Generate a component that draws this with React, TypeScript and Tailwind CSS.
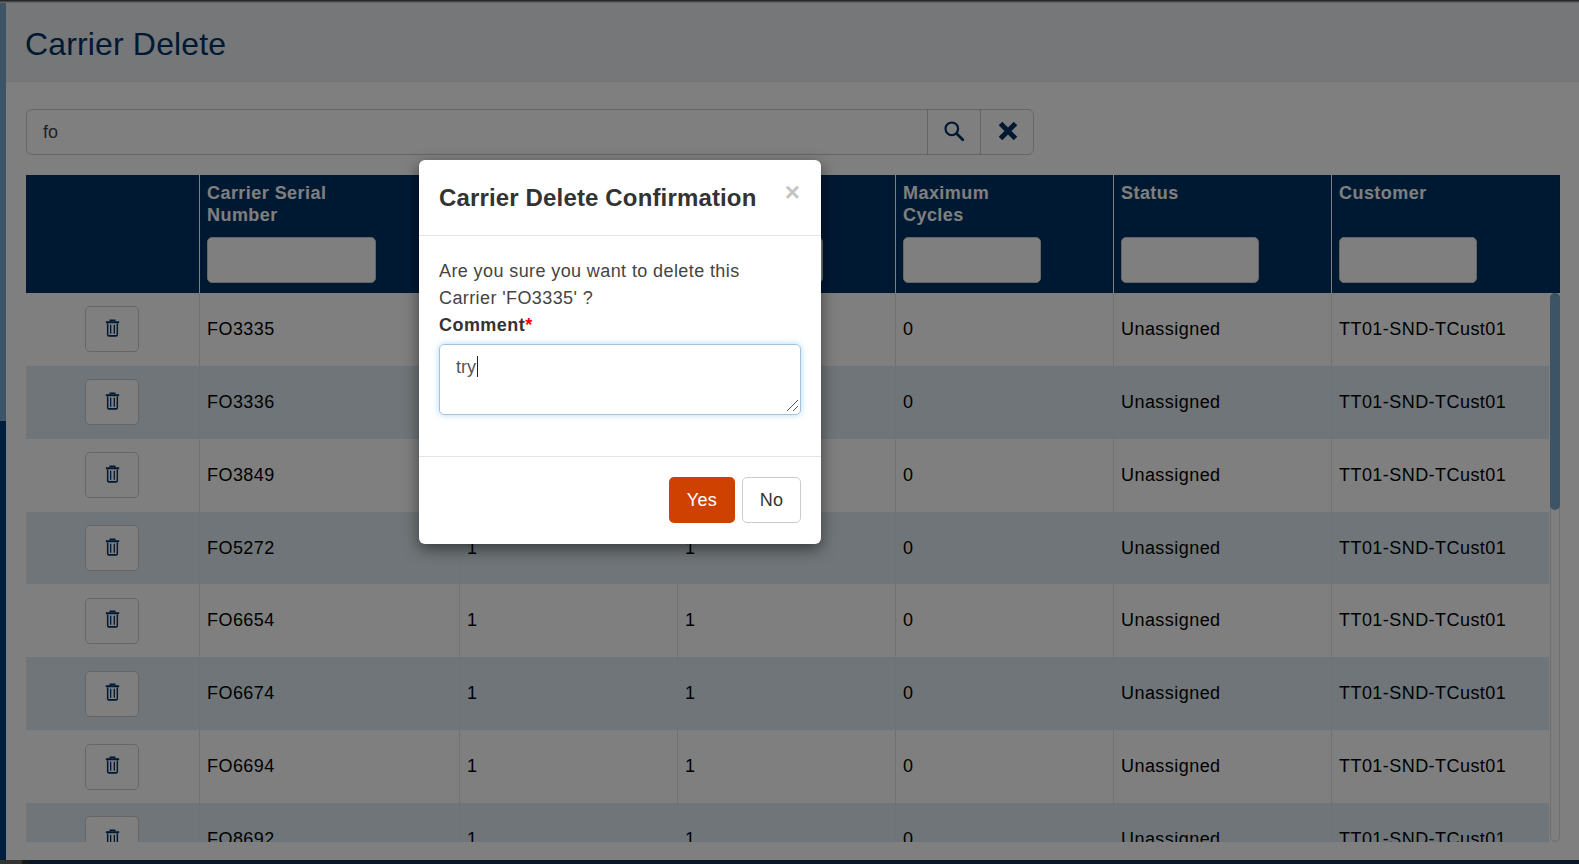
const rows = ["FO3335", "FO3336", "FO3849", "FO5272", "FO6654", "FO6674", "FO6694", "FO8692"]

const columns = "grid grid-cols-[173px_260px_218px_218px_218px_218px_1fr]"

function TrashIcon() {
  return (
    <svg width="15" height="18" viewBox="0 0 18 20" fill="none" stroke="#003366" strokeWidth="1.6" preserveAspectRatio="none">
      <path d="M6.2 3V1.3h5.6V3" />
      <path d="M1 3.6h16" strokeWidth="2.2" />
      <path d="M3.2 5v12.2c0 1 .6 1.6 1.6 1.6h8.4c1 0 1.6-.6 1.6-1.6V5" strokeWidth="1.8" />
      <path d="M6.8 6.5v10M11.2 6.5v10" />
    </svg>
  )
}

function HeaderCell({ label, wide }: { label?: string[]; wide?: boolean }) {
  return (
    <div className="border-l border-white px-[7px] pt-[7px]">
      <div className="h-[55px] text-[18px] leading-[22px] font-bold tracking-[0.45px] text-white">
        {label?.map((line) => <div key={line}>{line}</div>)}
      </div>
      <div className={`${wide ? "w-[169px]" : "w-[138px]"} h-[46px] rounded-[5px] border border-[#ccc] bg-white`} />
    </div>
  )
}

function DataRow({ serial, striped }: { serial: string; striped: boolean }) {
  const cell = "flex items-center border-l border-[#e4e4e4] px-[7px]"
  return (
    <div className={`${columns} h-[72.86px] shrink-0 text-[18px] tracking-[0.45px] text-black ${striped ? "bg-[#dfebf1]" : "bg-white"}`}>
      <div className="flex items-center justify-center pr-[2px]">
        <button className="flex h-[46px] w-[54px] items-center justify-center rounded-[5px] border border-[#ccc] bg-white pb-[3px] pl-[2px]">
          <TrashIcon />
        </button>
      </div>
      <div className={cell}>{serial}</div>
      <div className={cell}>1</div>
      <div className={cell}>1</div>
      <div className={cell}>0</div>
      <div className={cell}>Unassigned</div>
      <div className={cell}>TT01-SND-TCust01</div>
    </div>
  )
}

export default function App() {
  return (
    <div className="relative flex h-screen w-full flex-col overflow-hidden bg-white font-['Liberation_Sans',Arial,sans-serif]">
      <div className="h-[3px] shrink-0 bg-gradient-to-b from-[#333] to-[#eceff3]" />
      <div className="flex min-h-0 flex-1">
        {/* Sidebar edge */}
        <div className="flex w-[6px] shrink-0 flex-col">
          <div className="h-[418px] bg-[#7aa6cc]" />
          <div className="flex-1 bg-[#003e7e]" />
        </div>

        <div className="flex min-w-0 flex-1 flex-col">
          <div className="flex h-[79px] shrink-0 items-center border-b border-[#e5e7e9] bg-[#eceff3] pl-[19px] pt-[3px]">
            <h1 className="text-[32px] tracking-[0.15px] text-[#003366]">Carrier Delete</h1>
          </div>

          <div className="pl-[20px] pt-[27px]">
            {/* Search */}
            <div className="flex h-[46px] w-[1008px] rounded-[6px] border border-[#ccc] text-[18px] text-[#444]">
              <div className="flex flex-1 items-center pl-[16px]">fo</div>
              <div className="flex w-[53px] items-center justify-center border-l border-[#ccc]">
                <svg className="mb-[2px]" width="22" height="22" viewBox="0 0 22 22" fill="none" stroke="#003366">
                  <circle cx="8.8" cy="8.8" r="6.3" strokeWidth="2.2" />
                  <path d="M13.5 13.5l6.3 6.3" strokeWidth="2.8" strokeLinecap="round" />
                </svg>
              </div>
              <div className="flex w-[53px] items-center justify-center border-l border-[#ccc] pl-[1px]">
                <svg className="mb-[2px]" width="20" height="20" viewBox="0 0 20 20" fill="none" stroke="#003366" strokeWidth="5">
                  <path d="M2.5 2.5l15 15M17.5 2.5l-15 15" />
                </svg>
              </div>
            </div>

            {/* Table */}
            <div className="mt-[20px] h-[667px] w-[1534px]">
              <div className={`${columns} h-[118px] bg-[#003366]`}>
                <div />
                <HeaderCell label={["Carrier Serial", "Number"]} wide />
                <HeaderCell />
                <HeaderCell />
                <HeaderCell label={["Maximum", "Cycles"]} />
                <HeaderCell label={["Status"]} />
                <HeaderCell label={["Customer"]} />
              </div>
              <div className="flex h-[549px]">
                <div className="flex w-[1523px] flex-col overflow-hidden">
                  {rows.map((serial, i) => (
                    <DataRow key={serial} serial={serial} striped={i % 2 === 1} />
                  ))}
                </div>
                <div className="ml-px w-[10px] rounded-[5px] border border-[#ddd]">
                  <div className="-mx-px -mt-px h-[217px] rounded-[5px] bg-[#7aa6cc]" />
                </div>
              </div>
            </div>
          </div>
        </div>
      </div>
      <div className="flex h-[4px] shrink-0">
        <div className="w-[22px] bg-[#666]" />
        <div className="w-[7px] bg-[#333]" />
        <div className="flex-1 bg-[#14304d]" />
      </div>

      {/* Modal */}
      <div className="absolute inset-0 bg-black/50 pl-[419px] pt-[160px]">
        <div className="h-[384px] w-[402px] rounded-[6px] bg-white text-[#333] shadow-[0_5px_15px_rgba(0,0,0,0.5)]">
          <div className="flex h-[76px] items-start justify-between border-b border-[#e5e5e5] pl-[20px] pr-[21px] pt-[23px]">
            <h4 className="text-[24px] leading-[30px] font-bold tracking-[0.15px]">Carrier Delete Confirmation</h4>
            <span className="mt-[-3px] text-[26px] leading-[24px] font-bold text-[#c4c4c4]">×</span>
          </div>
          <div className="h-[221px] border-b border-[#e5e5e5] px-[20px] pt-[22px]">
            <p className="text-[18px] leading-[27px] tracking-[0.4px] text-[#444]">
              Are you sure you want to delete this
              <br />
              Carrier 'FO3335' ?
            </p>
            <label className="block text-[18px] leading-[27px] font-bold tracking-[0.45px]">
              Comment<span className="text-[#f00]">*</span>
            </label>
            <div className="relative mt-[5px]">
              <textarea
                defaultValue="try"
                className="block h-[71px] w-[362px] resize-none rounded-[5px] border border-[#a3c2dc] px-[16px] py-[9px] text-[18px] leading-[26px] text-[#555] shadow-[0_0_6px_rgba(102,175,233,0.5)] outline-none"
              />
              <div className="absolute left-[38px] top-[12px] h-[21px] w-px bg-[#222]" />
              <svg className="absolute bottom-[3px] right-[2px]" width="13" height="13" viewBox="0 0 13 13" stroke="#555" strokeWidth="1">
                <path d="M1 12L12 1M7 12l5-5" />
              </svg>
            </div>
          </div>
          <div className="flex justify-end gap-[7px] pr-[20px] pt-[20px] text-[18px] tracking-[0.3px]">
            <button className="h-[46px] w-[66px] rounded-[5px] bg-[#cf4100] text-white">Yes</button>
            <button className="h-[46px] w-[59px] rounded-[5px] border border-[#ccc] bg-white text-[#333]">No</button>
          </div>
        </div>
      </div>
    </div>
  )
}
